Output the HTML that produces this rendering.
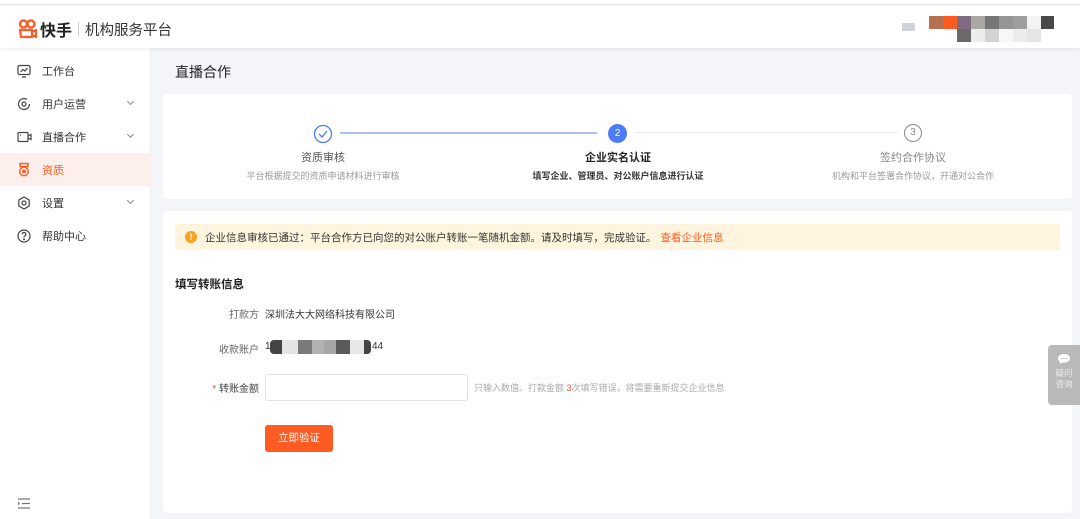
<!DOCTYPE html>
<html><head><meta charset="utf-8"><style>
*{margin:0;padding:0;box-sizing:border-box}
body{width:1080px;height:519px;overflow:hidden;background:#f4f5f8;font-family:"Liberation Sans","Noto Sans CJK SC",sans-serif;color:#333;position:relative}
.top{position:absolute;left:0;top:0;width:1080px;height:5px;background:#fff;border-bottom:1px solid #e6e6e6}
.hdr{position:absolute;left:0;top:6px;width:1080px;height:42px;background:#fff;box-shadow:0 2px 4px rgba(0,0,0,.06);z-index:2}
.logo{position:absolute;left:18px;top:11px;font-size:16px;font-weight:bold;color:#222;display:flex;align-items:center}
.logo .sep{width:1px;height:14px;background:#ccc;margin:0 6px}
.logo .t2{font-weight:normal;font-size:14.5px;color:#333}
.side{position:absolute;left:0;top:48px;width:151px;height:471px;background:#fff;border-right:1px solid #eceef2}
.mi{position:absolute;left:0;width:151px;height:33px;display:flex;align-items:center;font-size:11px;color:#333}
.mi svg{position:absolute;left:17px}
.mi span{position:absolute;left:42px}
.mi .ar{position:absolute;left:128px;width:5px;height:5px;border-right:1.2px solid #888;border-bottom:1.2px solid #888;transform:rotate(45deg);top:12px}
.act{background:#fdf0ec;color:#fe5b22}
h1{position:absolute;left:175px;top:62px;font-size:14px;font-weight:normal;color:#222}
.card{position:absolute;background:#fff;border-radius:4px}
.st{position:absolute;text-align:center;width:240px}
.st .n{font-size:11px;margin-top:0}
.st .d{font-size:9px;color:#999;margin-top:4px}
.alert{position:absolute;left:175px;top:224px;width:885px;height:26px;background:#fff5df;font-size:10.5px;color:#333;display:flex;align-items:center;padding-left:30px}
.alert i{position:absolute;left:10px;top:7px;width:12px;height:12px;border-radius:50%;background:#f7a325;color:#fff;font-style:normal;font-size:9px;text-align:center;line-height:12px;font-weight:bold}
.lb{position:absolute;font-size:10px;color:#666;text-align:right;width:80px}
.v{position:absolute;font-size:10px;color:#333}
</style></head><body>
<div class="top"></div>
<div class="hdr">
<div class="logo"><svg width="20" height="20" viewBox="0 0 20 20"><circle cx="5.5" cy="5" r="3.5" fill="none" stroke="#fe5b22" stroke-width="2.4"/><circle cx="13" cy="5" r="3.5" fill="none" stroke="#fe5b22" stroke-width="2.4"/><path d="M2 11h12v7H3zM14 13l4-2v7l-4-2z" fill="none" stroke="#fe5b22" stroke-width="2.2" stroke-linejoin="round"/></svg><span style="margin-left:2px">快手</span><span class="sep"></span><span class="t2">机构服务平台</span></div>
<div style="position:absolute;left:902px;top:17px;width:13px;height:8px;background:#cfd2d8;border-radius:1px"></div>
<div style="position:absolute;left:929px;top:10px;display:flex;height:13px">
<b style="width:14px;background:#b4704f"></b><b style="width:14px;background:#fe5b22"></b><b style="width:14px;background:#806b82"></b><b style="width:14px;background:#a9a8a5"></b><b style="width:14px;background:#777"></b><b style="width:14px;background:#959595"></b><b style="width:14px;background:#9e9e9e"></b><b style="width:14px;background:#f3f3f3"></b><b style="width:13px;background:#4a4a4a"></b></div>
<div style="position:absolute;left:957px;top:23px;display:flex;height:13px"><b style="width:14px;background:#6c6a69"></b><b style="width:14px;background:#ececec"></b><b style="width:14px;background:#d2d2d2"></b><b style="width:14px;background:#f7f7f7"></b><b style="width:14px;background:#ececec"></b><b style="width:14px;background:#e5e5e5"></b></div>
</div>
<div class="side">
<div class="mi" style="top:6px"><svg width="14" height="14" viewBox="0 0 14 14" fill="none" stroke="#444" stroke-width="1.2"><rect x="1" y="1.5" width="12" height="9" rx="1.5"/><path d="M3.5 8l2.5-2.5 2 1.5 2.5-3M5 13h4"/></svg><span>工作台</span></div>
<div class="mi" style="top:39px"><svg width="14" height="14" viewBox="0 0 14 14" fill="none" stroke="#444" stroke-width="1.2"><path d="M12.5 7A5.5 5.5 0 1 1 10 2.4"/><circle cx="7" cy="7" r="2"/></svg><span>用户运营</span><i class="ar"></i></div>
<div class="mi" style="top:72px"><svg width="16" height="14" viewBox="0 0 16 14" fill="none" stroke="#444" stroke-width="1.2"><rect x="1" y="2.5" width="10" height="9" rx="1"/><path d="M11 6l3-1.5v5L11 8"/><path d="M3 5h1"/></svg><span>直播合作</span><i class="ar"></i></div>
<div class="mi act" style="top:105px"><svg width="14" height="15" viewBox="0 0 14 15" fill="none" stroke="#fe5b22" stroke-width="1.4"><path d="M3 1.5h8v3H3z"/><circle cx="7" cy="9.5" r="4.3"/><circle cx="7" cy="9.5" r="1.2" fill="#fe5b22"/></svg><span>资质</span></div>
<div class="mi" style="top:138px"><svg width="14" height="14" viewBox="0 0 14 14" fill="none" stroke="#444" stroke-width="1.2"><path d="M7 1l5.2 3v6L7 13 1.8 10V4z"/><circle cx="7" cy="7" r="2"/></svg><span>设置</span><i class="ar"></i></div>
<div class="mi" style="top:171px"><svg width="14" height="14" viewBox="0 0 14 14" fill="none" stroke="#444" stroke-width="1.2"><circle cx="7" cy="7" r="6"/><path d="M5.2 5.3a1.8 1.8 0 1 1 2.4 1.7c-.5.2-.6.6-.6 1.2"/><circle cx="7" cy="10.3" r=".4" fill="#444"/></svg><span>帮助中心</span></div>
<svg style="position:absolute;left:18px;top:450px" width="13" height="11" viewBox="0 0 13 11" fill="none" stroke="#777" stroke-width="1.2"><path d="M0 1h12M4 5.5h8M0 10h12"/><path d="M0 3.5l2 2-2 2z" fill="#777" stroke="none"/></svg>
</div>
<h1>直播合作</h1>
<div class="card" style="left:163px;top:94px;width:909px;height:105px">
<svg style="position:absolute;left:150px;top:30px" width="20" height="20" viewBox="0 0 20 20"><circle cx="10" cy="10" r="8.5" fill="none" stroke="#4c7cf5" stroke-width="1.3"/><path d="M6 10l3 3 5-6" fill="none" stroke="#4c7cf5" stroke-width="1.3"/></svg>
<div style="position:absolute;left:177px;top:38px;width:257px;height:2px;background:#a8bef8"></div>
<div style="position:absolute;left:445px;top:30px;width:19px;height:19px;border-radius:50%;background:#4c7cf5;color:#fff;font-size:10px;text-align:center;line-height:19px">2</div>
<div style="position:absolute;left:472px;top:38px;width:263px;height:1px;background:#ececec"></div>
<div style="position:absolute;left:741px;top:30px;width:18px;height:18px;border-radius:50%;border:1.3px solid #888;color:#888;font-size:10px;text-align:center;line-height:16px">3</div>
<div class="st" style="left:40px;top:55px"><div class="n" style="color:#555">资质审核</div><div class="d">平台根据提交的资质申请材料进行审核</div></div>
<div class="st" style="left:335px;top:55px"><div class="n" style="color:#222;font-weight:bold">企业实名认证</div><div class="d" style="color:#333;font-weight:bold">填写企业、管理员、对公账户信息进行认证</div></div>
<div class="st" style="left:630px;top:55px"><div class="n" style="color:#888">签约合作协议</div><div class="d">机构和平台签署合作协议，开通对公合作</div></div>
</div>
<div class="card" style="left:163px;top:211px;width:909px;height:302px"></div>
<div class="alert"><i>!</i>企业信息审核已通过：平台合作方已向您的对公账户转账一笔随机金额。请及时填写，完成验证。<span style="color:#fe5b22;margin-left:4px">查看企业信息</span></div>
<div style="position:absolute;left:175px;top:276px;font-size:11.5px;font-weight:bold;color:#222">填写转账信息</div>
<div class="lb" style="left:179px;top:306px">打款方</div><div class="v" style="left:265px;top:306px">深圳法大大网络科技有限公司</div>
<div class="lb" style="left:179px;top:341px">收款账户</div><div class="v" style="left:265px;top:341px">1</div>
<div style="position:absolute;left:270px;top:340px;display:flex;height:14px"><b style="width:12px;background:#444;border-radius:4px 0 0 4px"></b><b style="width:16px;background:#e4e4e4"></b><b style="width:14px;background:#7a7a7a"></b><b style="width:12px;background:#b2b2b2"></b><b style="width:12px;background:#a6a6a6"></b><b style="width:14px;background:#5b5b5b"></b><b style="width:14px;background:#e8e8e8"></b><b style="width:7px;background:#444;border-radius:0 4px 4px 0"></b></div>
<div class="v" style="left:372px;top:341px">44</div>
<div class="lb" style="left:179px;top:380px"><span style="color:#f04a3a">* </span><span style="color:#444">转账金额</span></div>
<div style="position:absolute;left:265px;top:374px;width:203px;height:27px;border:1px solid #e2e2e2;border-radius:3px;background:#fff"></div>
<div style="position:absolute;left:474px;top:381px;font-size:9px;color:#aaa">只输入数值。打款金额 <span style="color:#f04a3a">3</span>次填写错误，将需要重新提交企业信息</div>
<div style="position:absolute;left:265px;top:425px;width:68px;height:27px;background:#fe5b22;border-radius:3px;color:#fff;font-size:10.5px;text-align:center;line-height:27px">立即验证</div>
<div style="position:absolute;left:1048px;top:345px;width:32px;height:60px;background:#b9b9b9;border-radius:4px 0 0 4px;color:#eee;font-size:8.5px;text-align:center;line-height:11px;padding-top:8px">
<svg width="14" height="12" viewBox="0 0 14 12"><path d="M7 1C3.5 1 1 3 1 5.5c0 1.4.8 2.6 2 3.4V11l2.5-1.5c.5.1 1 .1 1.5.1 3.5 0 6-2 6-4.5S10.5 1 7 1z" fill="#fff"/><circle cx="4.5" cy="5.5" r=".8" fill="#b9b9b9"/><circle cx="7" cy="5.5" r=".8" fill="#b9b9b9"/><circle cx="9.5" cy="5.5" r=".8" fill="#b9b9b9"/></svg><br>疑问<br>咨询</div>
</body></html>
